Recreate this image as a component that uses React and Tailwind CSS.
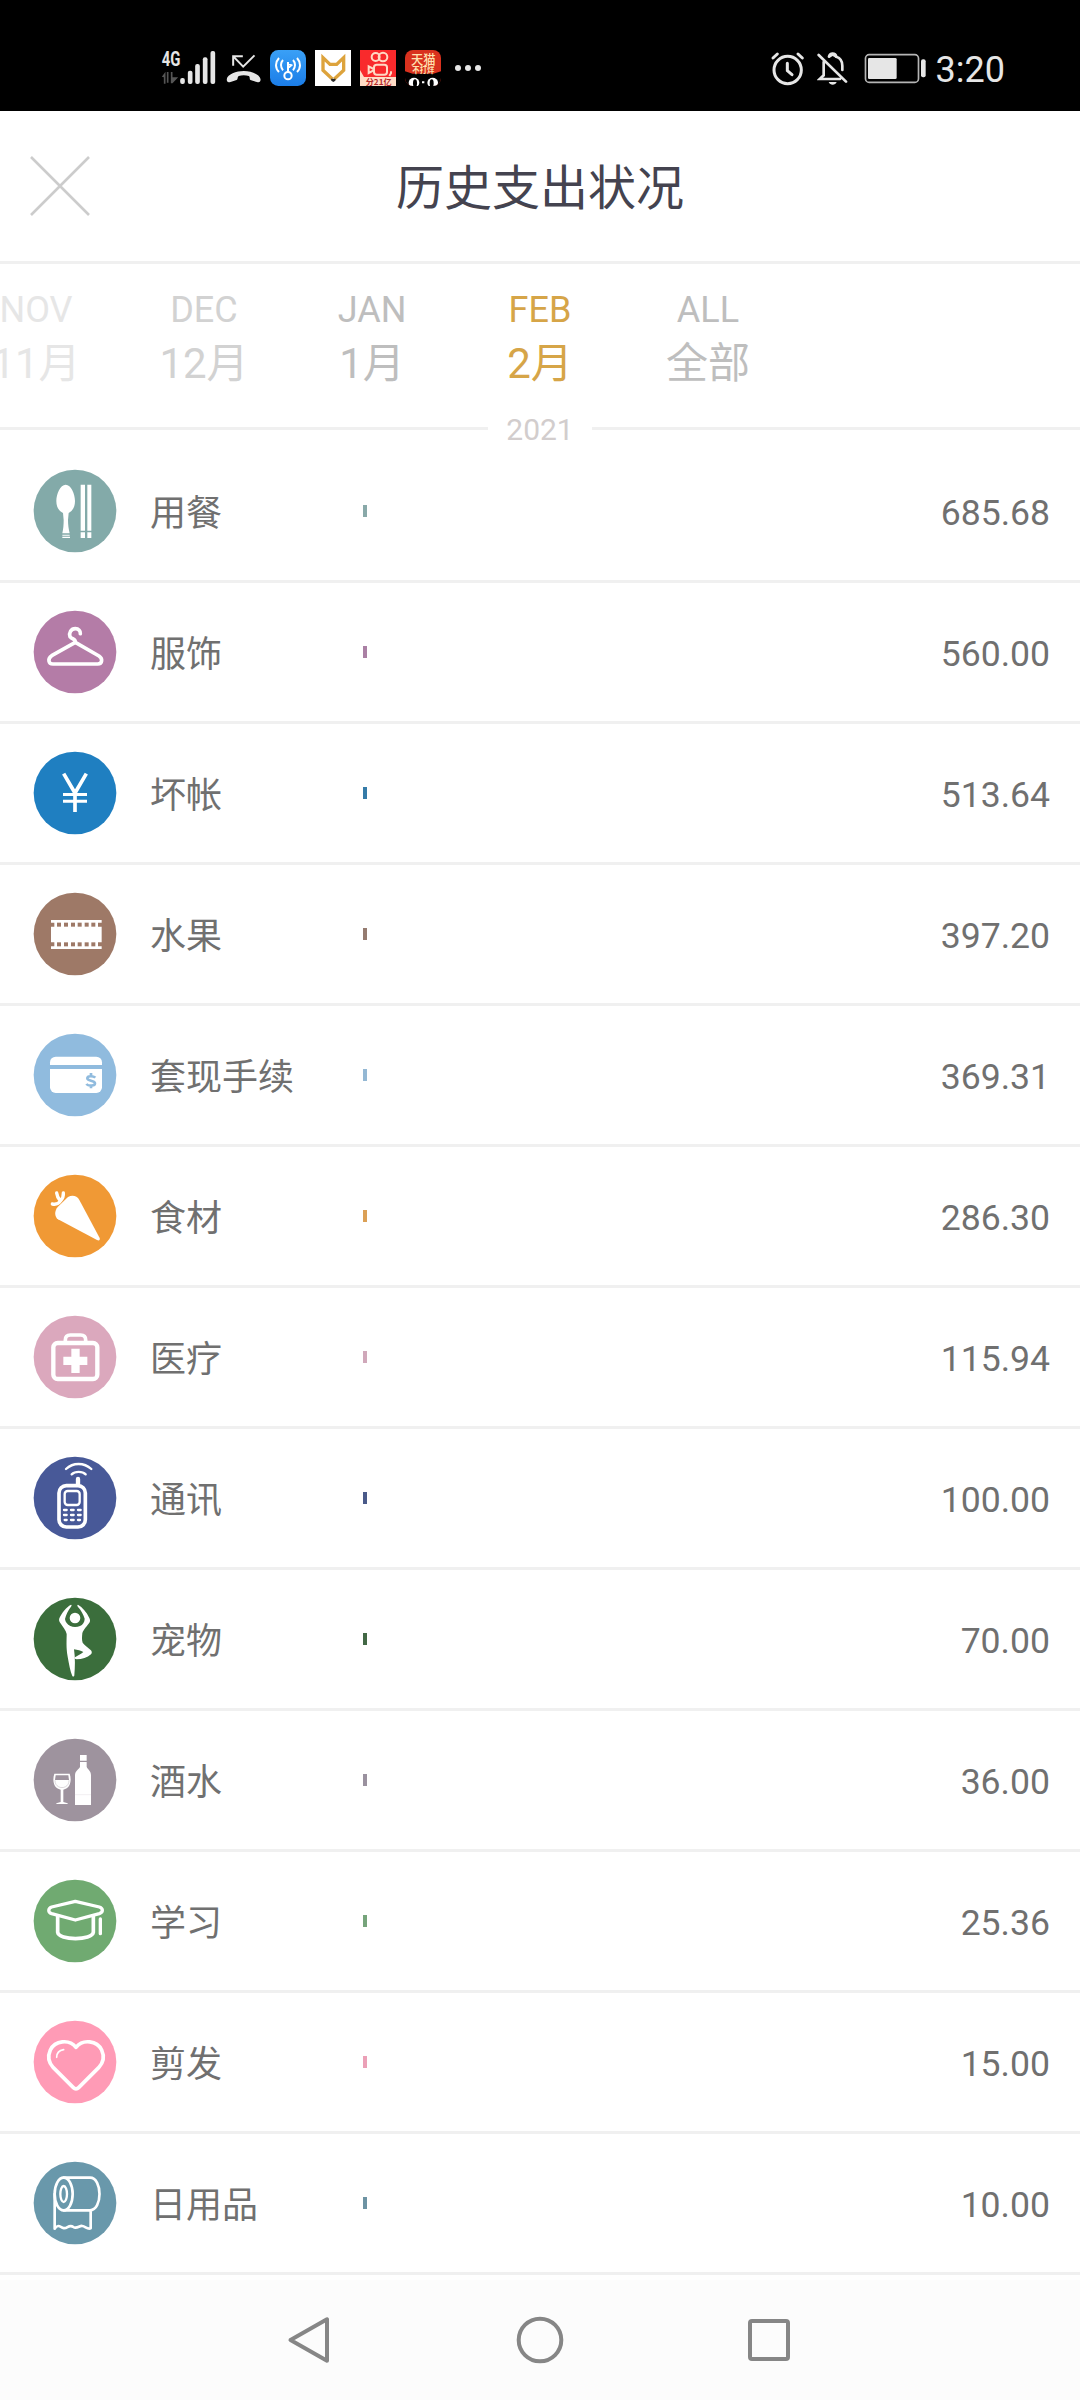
const FONT = "font-[Roboto,'Noto_Sans_CJK_SC',sans-serif]";

const months = [
  { en: "NOV", cn: "11月", color: "text-[#e6e6e6]" },
  { en: "DEC", cn: "12月", color: "text-[#d2d2d2]" },
  { en: "JAN", cn: "1月", color: "text-[#bebebe]" },
  { en: "FEB", cn: "2月", color: "text-[#d6a548]" },
  { en: "ALL", cn: "全部", color: "text-[#bebebe]" },
];

function Badge({ y, fill, children }) {
  return (
    <svg viewBox={`99 ${y} 252 252`} className="h-[84px] w-[84px] shrink-0" fill="none" strokeLinecap="round" strokeLinejoin="round">
      <circle cx="225" cy={y + 126} r="124" fill={fill} />
      {children}
    </svg>
  );
}

const Dining = () => (
  <Badge y={87} fill="#83aaa9">
    <path fill="#fff" d="M197 134C213 134 225 161 225 183C225 202 217 213 206 219L204 240C204 255 206 267 209 280H187C190 267 191 255 191 240L189 219C177 213 169 202 169 183C169 161 181 134 197 134Z" />
    <path fill="#fff" d="M187 284h22v3h-22zM187 290h23v4h-23zM242 134h13v138h-13zM262 134h12v138h-12zM242 277h13v17h-13zM262 277h12v17h-12z" />
  </Badge>
);

const Hanger = () => (
  <Badge y={510} fill="#b47ca7">
    <path stroke="#fff" strokeWidth="11" d="M210 590C206 578 213 566 226 566C236 566 242 573 241 581M210 590C216 599 226 594 226 607L155 647C142 656 145 672 159 672H293C307 672 309 656 297 648L226 607" />
  </Badge>
);

const Yen = () => (
  <Badge y={93} fill="#1f7fc1">
    <path stroke="#fff" strokeWidth="11" strokeLinecap="butt" strokeLinejoin="miter" d="M191 161L225 219L259 161M225 216V276" />
    <path fill="#fff" d="M189 219h72v9h-72zM189 239h72v9h-72z" />
  </Badge>
);

const Film = () => (
  <Badge y={516} fill="#9e7967">
    <path fill="#fff" d="M153 600H305V687H153Z" />
    {[608, 667].map((y) => (
      <g key={y} fill="#9e7967">
        <path d={`M152 ${y}h11v12h-11zM294 ${y}h12v12h-12z`} />
        {[171, 192, 213, 233, 254, 274].map((x) => (
          <rect key={x} x={x} y={y} width="12" height="12" />
        ))}
      </g>
    ))}
  </Badge>
);

const Card = () => (
  <Badge y={99} fill="#90bbde">
    <rect x="150" y="170" width="156" height="109" rx="17" fill="#fff" />
    <path fill="#90bbde" d="M149 195h159v12h-159z" />
    <path stroke="#90bbde" strokeWidth="8" strokeLinecap="butt" d="M286 233C281 228 262 226 262 235C262 244 285 240 285 250C285 259 265 259 259 252M273 219V230M273 256V265" />
  </Badge>
);

const Carrot = () => (
  <Badge y={522} fill="#f09935">
    <path fill="#fff" d="M204 591C218 584 231 588 238 600L299 714C301 720 297 723 291 720L174 658C163 650 163 633 173 621Z" />
    <path stroke="#fff" strokeWidth="10" d="M157 612C168 614 177 610 181 603C174 595 171 588 170 579M181 603C188 596 191 588 190 579" />
  </Badge>
);

const Medical = () => (
  <Badge y={105} fill="#dba8bd">
    <rect x="160" y="189" width="132" height="108" rx="13" stroke="#fff" strokeWidth="13" />
    <path stroke="#fff" strokeWidth="11" strokeLinecap="butt" d="M196 187V180C196 170 202 165 211 165H242C251 165 257 170 257 180V187" />
    <path fill="#fff" d="M214 206h25v24h23v25h-23v24h-25v-24h-24v-25h24z" />
  </Badge>
);

const Phone = () => (
  <Badge y={528} fill="#485998">
    <rect x="177" y="617" width="79" height="124" rx="22" stroke="#fff" strokeWidth="11" />
    <rect x="194" y="633" width="45" height="42" rx="9" stroke="#fff" strokeWidth="7" />
    <path stroke="#fff" strokeWidth="13" d="M234 597V614" />
    <path stroke="#fff" strokeWidth="7" d="M198 567C219 547 252 547 274 567M215 583C225 573 247 573 257 583" />
    <path stroke="#fff" strokeWidth="7" d="M192 690H200M213 690H221M234 690H242M192 705H200M213 705H221M234 705H242M194 720H200M213 720H221M234 720H240" />
  </Badge>
);

const Yoga = () => (
  <Badge y={111} fill="#3b6e3c">
    <circle cx="225" cy="174" r="16" fill="#fff" />
    <path fill="#fff" d="M213 134C198 142 186 158 178 175C176 181 178 185 181 189C188 200 198 211 200 222C200 240 198 262 203 290C207 312 211 334 217 348C219 351 223 350 223 346C225 322 226 296 222 268C233 270 242 272 250 276C243 282 233 287 225 292C223 296 226 298 230 298C246 298 262 293 273 283C277 279 276 273 271 269C263 262 253 255 248 248C245 240 246 230 247 220C250 209 263 197 269 187C271 182 270 178 268 174C260 156 247 142 234 134C231 134 232 138 234 141C243 151 250 163 254 176C254 187 248 194 240 198C231 202 219 202 211 198C202 193 196 187 195 177C198 163 205 151 213 140C215 137 216 134 213 134Z" />
  </Badge>
);

const Wine = () => (
  <Badge y={534} fill="#9e939e">
    <path fill="#fff" d="M240 585h20v17h-20zM240 606h20v14C262 628 273 631 273 646V735H225V646C225 631 238 628 240 620Z" />
    <path stroke="#e4e0e4" strokeWidth="1.5" d="M226 704H272" />
    <path fill="#fff" d="M163 641H209C215 659 213 684 190 689V726L203 730V732H169V730L182 726V689C159 684 157 659 163 641Z" />
    <path fill="#9e939e" d="M167 646H205L207 660H165Z" />
    <path stroke="#bab2ba" strokeWidth="1.5" d="M165 662C164 690 208 690 207 662" />
  </Badge>
);

const Cap = () => (
  <Badge y={117} fill="#70aa71">
    <path stroke="#fff" strokeWidth="10" d="M226 184L155 201C144 205 143 217 155 221L226 240L298 221C310 217 310 205 298 201Z" />
    <path stroke="#fff" strokeWidth="11" d="M173 229V277C176 302 277 302 280 277V229" />
    <path stroke="#fff" strokeWidth="10" d="M301 237V281" />
  </Badge>
);

const Heart = () => (
  <Badge y={540} fill="#ff9bb6">
    <path stroke="#fff" strokeWidth="11" d="M228 622C207 596 165 602 151 630C142 650 147 669 160 683L220 743C225 748 231 748 236 743L296 683C309 669 314 650 305 630C291 602 249 596 228 622Z" />
    <path stroke="#fff" strokeWidth="5" d="M170 652C170 639 179 631 191 629" />
  </Badge>
);

const Roll = () => (
  <Badge y={123} fill="#6998ab">
    <g stroke="#fff" strokeWidth="8">
      <ellipse cx="191" cy="222" rx="27" ry="49" />
      <path d="M191 173H270C308 173 308 271 270 271H191M164 222V326C174 311 181 321 190 324C201 328 207 311 220 321C230 328 239 316 247 318C256 319 262 329 272 325V273" />
    </g>
    <ellipse cx="191" cy="222" rx="10" ry="24" stroke="#fff" strokeWidth="7" />
  </Badge>
);

const rows = [
  { icon: Dining, name: "用餐", amount: "685.68", bar: "bg-[#89a9a9]" },
  { icon: Hanger, name: "服饰", amount: "560.00", bar: "bg-[#aa80a4]" },
  { icon: Yen, name: "坏帐", amount: "513.64", bar: "bg-[#357ba8]" },
  { icon: Film, name: "水果", amount: "397.20", bar: "bg-[#957b70]" },
  { icon: Card, name: "套现手续", amount: "369.31", bar: "bg-[#94b8d4]" },
  { icon: Carrot, name: "食材", amount: "286.30", bar: "bg-[#dba056]" },
  { icon: Medical, name: "医疗", amount: "115.94", bar: "bg-[#d0a8ba]" },
  { icon: Phone, name: "通讯", amount: "100.00", bar: "bg-[#4a5a89]" },
  { icon: Yoga, name: "宠物", amount: "70.00", bar: "bg-[#426845]" },
  { icon: Wine, name: "酒水", amount: "36.00", bar: "bg-[#9a919f]" },
  { icon: Cap, name: "学习", amount: "25.36", bar: "bg-[#76a47b]" },
  { icon: Heart, name: "剪发", amount: "15.00", bar: "bg-[#eba0b7]" },
  { icon: Roll, name: "日用品", amount: "10.00", bar: "bg-[#6d93a3]" },
];

function StatusBar() {
  return (
    <div className="flex h-[111px] items-start justify-between bg-black pt-[48px] pr-[75px] pl-[160px] text-[#e6e6e6]">
      <div className="flex h-[40px] items-start">
        <svg viewBox="30 54 170 114" className="h-[38px] w-[57px]" fill="#e6e6e6">
          <text x="35" y="107" fontSize="61" fontWeight="700" textLength="56" lengthAdjust="spacingAndGlyphs" fontFamily="Roboto, sans-serif">4G</text>
          <path fill="#555" d="M35 140L46 125V161H41V142ZM50 126H55V158H50ZM62 126H67V142L84 142L67 160H62Z" />
          <rect x="90" y="144" width="14" height="18" rx="6" />
          <rect x="113" y="122" width="14" height="40" rx="6" />
          <rect x="135" y="102" width="14" height="60" rx="6" />
          <rect x="158" y="82" width="14" height="80" rx="6" />
          <rect x="181" y="63" width="14" height="99" rx="6" />
        </svg>
        <svg viewBox="225 54 110 114" className="ml-[8px] h-[38px] w-[37px]" fill="none" stroke="#e6e6e6" strokeWidth="6">
          <path d="M313 76L279 110L250 80M249 107V79H278" />
          <path stroke="none" fill="#e6e6e6" d="M230 147C232 133 258 123 281 123C304 123 328 133 331 147C332 156 328 158 320 156L303 151C296 149 301 141 296 138C287 135 274 135 266 138C260 141 265 149 257 151L241 156C233 158 229 156 230 147Z" />
        </svg>
        <svg viewBox="360 60 108 108" className="mt-[2px] ml-[8px] h-[36px] w-[36px]" fill="none" stroke="#fff" strokeWidth="6">
          <defs>
            <linearGradient id="wifi" x1="0" y1="0" x2="0" y2="1">
              <stop offset="0" stopColor="#3aa0f6" />
              <stop offset="1" stopColor="#1b7de8" />
            </linearGradient>
          </defs>
          <rect x="360" y="60" width="108" height="108" rx="25" fill="url(#wifi)" stroke="none" />
          <circle cx="414" cy="137" r="11" />
          <path d="M414 126V96M414 101L424 106L417 112M399 90C391 98 391 112 399 121M387 84C375 97 375 114 387 126M429 90C437 98 437 112 429 121M441 84C453 97 453 114 441 126" />
        </svg>
        <svg viewBox="495 60 108 108" className="mt-[2px] ml-[9px] h-[36px] w-[36px]">
          <path fill="#fff" d="M495 60h108v108H495z" />
          <path fill="none" stroke="#dda33c" strokeWidth="10" d="M547 147L519 121V83L540 103H560L581 83V121L553 147" />
          <path fill="#2a2a2a" d="M543 146h14l-1 6l-6 4l-6-4z" />
        </svg>
        <svg viewBox="630 60 108 108" className="mt-[2px] ml-[9px] h-[36px] w-[36px]" fill="none" stroke="#ffd9c4" strokeWidth="6">
          <path fill="#f92a2c" stroke="none" d="M630 60h108v108H630z" />
          <path fill="#ffdcc6" stroke="none" d="M630 120L642 141H738V168H630Z" />
          <circle cx="677" cy="81" r="12" />
          <circle cx="699" cy="81" r="13" />
          <rect x="672" y="104" width="39" height="30" rx="8" />
          <path d="M671 117L656 109V129L671 121M723 124V130L718 138" />
          <text x="647" y="164" fontSize="24" fontWeight="700" fill="#b5282b" stroke="none" textLength="78" lengthAdjust="spacingAndGlyphs" fontFamily="'Noto Sans CJK SC', sans-serif">分21亿</text>
        </svg>
        <svg viewBox="765 60 108 108" className="mt-[2px] ml-[9px] h-[36px] w-[36px]">
          <defs>
            <clipPath id="tile">
              <rect x="765" y="60" width="108" height="108" rx="24" />
            </clipPath>
          </defs>
          <g clipPath="url(#tile)">
            <path fill="#d9311e" d="M765 60h108v108H765z" />
            <path fill="#000" d="M765 124L788 131H850L873 124V168H765Z" />
            <ellipse cx="792" cy="158" rx="16" ry="15" fill="#fff" />
            <ellipse cx="848" cy="158" rx="16" ry="15" fill="#fff" />
            <ellipse cx="795" cy="160" rx="6" ry="12" />
            <ellipse cx="845" cy="160" rx="6" ry="12" />
            <path fill="#fff" d="M816 154h7v6h-7z" />
            <g fill="#ffe2b0" fontFamily="'Noto Sans CJK SC', sans-serif">
              <text x="783" y="101" fontSize="38" fontWeight="500" textLength="74" lengthAdjust="spacingAndGlyphs">天猫</text>
              <text x="787" y="128" fontSize="23" fontWeight="700" textLength="66" lengthAdjust="spacingAndGlyphs">不打烊</text>
            </g>
          </g>
        </svg>
        <div className="mt-[17px] ml-[14px] flex gap-[4px]">
          <span className="h-[6px] w-[6px] rounded-full bg-[#e6e6e6]" />
          <span className="h-[6px] w-[6px] rounded-full bg-[#e6e6e6]" />
          <span className="h-[6px] w-[6px] rounded-full bg-[#e6e6e6]" />
        </div>
      </div>
      <div className="flex h-[40px] items-start">
        <svg viewBox="60 54 105 114" className="h-[38px] w-[35px]" fill="none" stroke="#e6e6e6" strokeWidth="9" strokeLinecap="round" strokeLinejoin="round">
          <circle cx="113" cy="120" r="41" />
          <path d="M112 100V122L126 134M69 84L82 72M157 84L144 72" />
        </svg>
        <svg viewBox="201 54 96 114" className="ml-[12px] h-[38px] w-[32px]" fill="none" stroke="#e6e6e6" strokeWidth="8" strokeLinecap="round">
          <path d="M206 75L288 155M221 96V136L209 147H270M237 80C240 68 256 68 259 80C271 84 277 95 277 107V120" />
          <path stroke="none" fill="#e6e6e6" d="M236 156H260C256 167 240 167 236 156ZM238 84V74L248 68L258 74V84L248 78Z" />
        </svg>
        <svg viewBox="342 54 189 114" className="ml-[15px] h-[38px] w-[63px]" fill="#e6e6e6">
          <rect x="346.500" y="74" width="159" height="83" rx="11" fill="none" stroke="#b5b5b5" strokeWidth="5" />
          <rect x="354" y="84" width="86" height="63" rx="4" />
          <rect x="513" y="88" width="14" height="54" rx="6" />
        </svg>
        <span className="mt-px ml-[9px] text-[36px] leading-[42px]">3:20</span>
      </div>
    </div>
  );
}

export default function App() {
  return (
    <div className={`flex h-[2400px] w-[1080px] flex-col overflow-hidden bg-white ${FONT}`}>
      <StatusBar />
      <header className="grid h-[153px] grid-cols-[120px_1fr_120px] items-center border-b-[3px] border-[#f0f0f0]">
        <svg viewBox="0 0 60 60" className="ml-[29.5px] h-[60px] w-[60px]" stroke="#cccccc" strokeWidth="2.600">
          <path d="M1 1L59 59M59 1L1 59" />
        </svg>
        <h1 className="pt-[6px] text-center text-[48px] leading-[56px] text-[#44434f]">历史支出状况</h1>
      </header>
      <nav className="-ml-[48px] flex h-[148px] pt-[25px]">
        {months.map((m) => (
          <div key={m.en} className={`flex w-[168px] shrink-0 flex-col items-center whitespace-nowrap ${m.color}`}>
            <span className="text-[36px] leading-[42px]">{m.en}</span>
            <span className="mt-[3px] text-[42px] leading-[60px]">{m.cn}</span>
          </div>
        ))}
      </nav>
      <div className="flex h-[30px] items-center">
        <span className="mt-[3px] h-[3px] flex-1 bg-[#f0f0f0]" />
        <span className="w-[104px] pt-[5px] text-center text-[30px] leading-[30px] text-[#d2cdcd]">2021</span>
        <span className="mt-[3px] h-[3px] flex-1 bg-[#f0f0f0]" />
      </div>
      <ul>
        {rows.map(({ icon: Icon, name, amount, bar }) => (
          <li key={name} className="flex h-[141px] items-center border-b-[3px] border-[#f0f0f0] pr-[30px] pl-[33px] text-[36px] leading-[42px] text-[#707070]">
            <Icon />
            <span className="ml-[33px] w-[213px] pt-[5px]">{name}</span>
            <span className={`h-[12px] w-[4px] ${bar}`} />
            <span className="mt-[3px] ml-auto text-[35.6px]">{amount}</span>
          </li>
        ))}
      </ul>
      <footer className="mt-[5px] flex h-[120px] items-center justify-center gap-[182px] bg-[#fcfcfc]">
        <svg viewBox="0 0 48 48" className="h-[48px] w-[48px]" fill="none" stroke="#868686" strokeWidth="4" strokeLinejoin="round">
          <path d="M4.500 24L41 3.300V44.700Z" />
        </svg>
        <svg viewBox="0 0 48 48" className="h-[48px] w-[48px]" fill="none" stroke="#868686" strokeWidth="4">
          <circle cx="24" cy="24" r="21.300" />
        </svg>
        <svg viewBox="0 0 48 48" className="h-[48px] w-[48px]" fill="none" stroke="#868686" strokeWidth="4">
          <rect x="4" y="5" width="38" height="38" rx="2" />
        </svg>
      </footer>
    </div>
  );
}
